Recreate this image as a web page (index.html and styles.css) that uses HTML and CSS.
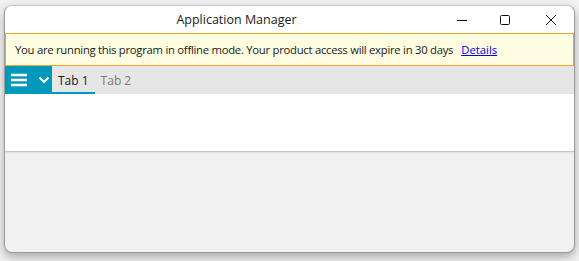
FILE: index.html
```html
<!DOCTYPE html>
<html lang="en">
<head>
    <meta charset="UTF-8">
    <title>Application Manager</title>
    <link rel="stylesheet" href="styles.css">
</head>
<body>
    <div class="window">
        <div class="titlebar">
            <div class="title">Application Manager</div>
            <div class="controls">
                <span class="ctrl min">
                    <svg width="12" height="12" viewBox="0 0 12 12"><path d="M1 6.5h10" stroke="#111" stroke-width="1"/></svg>
                </span>
                <span class="ctrl">
                    <svg width="12" height="12" viewBox="0 0 12 12"><rect x="1.5" y="1.5" width="9" height="9" rx="1" fill="none" stroke="#111" stroke-width="1"/></svg>
                </span>
                <span class="ctrl">
                    <svg width="12" height="12" viewBox="0 0 12 12"><path d="M1 1l10 10M11 1L1 11" stroke="#111" stroke-width="1"/></svg>
                </span>
            </div>
        </div>
        <div class="banner">
            <span>You are running this program in offline mode. Your product access will expire in 30 days</span>
            <a href="#" class="details">Details</a>
        </div>
        <div class="tabbar">
            <div class="menu-btn">
                <svg width="16" height="14" viewBox="0 0 16 14"><path d="M0 2h16M0 7h16M0 12h16" stroke="#fff" stroke-width="2.4"/></svg>
                <svg width="12" height="8" viewBox="0 0 12 8"><path d="M1.5 1.5l4.5 4.5 4.5-4.5" fill="none" stroke="#fff" stroke-width="2"/></svg>
            </div>
            <div class="tab active">Tab 1</div>
            <div class="tab">Tab 2</div>
        </div>
        <div class="content"></div>
        <div class="footer-area"></div>
    </div>
</body>
</html>
```

FILE: styles.css
```css
body {
    margin: 0;
    background: #f2f2f2;
    font-family: 'Open Sans', 'Noto Sans', sans-serif;
    height: 261px;
    overflow: hidden;
}
.window {
    margin: 5px 4px 0 4px;
    width: 571px;
    height: 248px;
    background: #f1f1f1;
    border: 1px solid #9a9a9a;
    border-top-color: #c8c8c8;
    box-sizing: border-box;
    border-radius: 8px;
    box-shadow: 0 4px 10px rgba(0,0,0,0.3);
    overflow: hidden;
    display: flex;
    flex-direction: column;
}
.titlebar {
    height: 27px;
    background: #fff;
    display: flex;
    align-items: center;
    position: relative;
}
.title {
    flex: 1;
    text-align: center;
    font-size: 12.5px;
    color: #1a1a1a;
    padding-right: 106px;
}
.controls {
    position: absolute;
    right: 0;
    top: 0;
    display: flex;
}
.ctrl {
    width: 46px;
    height: 28px;
    display: flex;
    align-items: center;
    justify-content: center;
}
.ctrl.min {
    padding-left: 6px;
    box-sizing: border-box;
}
.banner {
    height: 33px;
    background: #fffde1;
    border: 1px solid #f2a62a;
    box-sizing: border-box;
    display: flex;
    align-items: center;
    padding-left: 9px;
    font-size: 11.3px;
    letter-spacing: -0.27px;
    color: #1a1a1a;
}
.details {
    margin-left: 8px;
    letter-spacing: 0;
    color: #0000ee;
}
.tabbar {
    height: 28px;
    background: #e6e6e6;
    display: flex;
}
.menu-btn {
    width: 47px;
    background: #0099bc;
    display: flex;
    align-items: center;
    padding-left: 6px;
    gap: 11px;
    box-sizing: border-box;
}
.tab {
    padding: 0 6px;
    font-size: 12px;
    color: #7a7a7a;
    display: flex;
    align-items: center;
    box-sizing: border-box;
    border-bottom: 2px solid transparent;
    padding-top: 2px;
}
.tab.active {
    color: #1a1a1a;
    border-bottom-color: #0099bc;
}
.content {
    height: 57px;
    background: #fff;
    border-bottom: 1px solid #c6c6c6;
    box-shadow: 0 1px 2px rgba(0,0,0,0.08);
}
.footer-area {
    flex: 1;
}
```
